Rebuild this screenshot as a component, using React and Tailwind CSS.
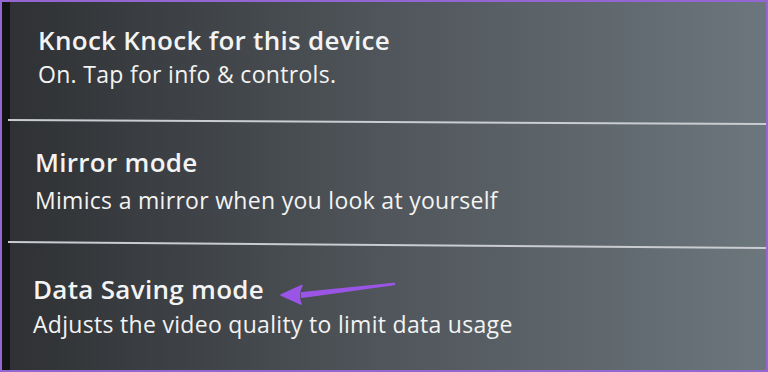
import React from 'react'

const rows = [
  { title: 'Knock Knock for this device', sub: 'On. Tap for info & controls.', pad: 'pt-[23px] pl-[28px]', gap: 'mt-[4px]' },
  { title: 'Mirror mode', sub: 'Mimics a mirror when you look at yourself', pad: 'pt-[24px] pl-[25px]', gap: 'mt-[8px]' },
  { title: 'Data Saving mode', sub: 'Adjusts the video quality to limit data usage', pad: 'pt-[28px] pl-[23px]', gap: 'mt-[5px]' },
]

const Arrow = () => (
  <svg className="absolute left-[276px] top-[278px]" width="122" height="30" viewBox="0 0 122 30">
    <path d="M116 4 L24 13.2 L24 16.8 Z" fill="#9b55e6" stroke="#9b55e6" strokeWidth="2.5" strokeLinejoin="round" />
    <path d="M3 15 L24 5.5 Q19 14.5 23 24 Z" fill="#9b55e6" stroke="#9b55e6" strokeWidth="1.5" strokeLinejoin="round" />
  </svg>
)

export default function App() {
  return (
    <div className="relative w-[768px] h-[372px] border-2 border-[#9466d2] bg-[#111214] flex overflow-hidden" style={{ fontFamily: '"Open Sans", "Noto Sans", sans-serif' }}>
      <div className="w-[8px] shrink-0 bg-[#121315]" />
      <div className="flex-1 flex flex-col bg-gradient-to-r from-[#2f3134] via-[#50565b] to-[#6c767d]">
        {rows.map((r, i) => (
          <React.Fragment key={r.title}>
            {i > 0 && <div className={`h-[2px] -ml-[2px] bg-[#c9cdd1] ${i === 1 ? 'rotate-[0.3deg]' : 'rotate-[0.45deg]'}`} />}
            <div className={`flex-1 flex flex-col text-[#f3f3f3] ${r.pad}`}>
              <div className="text-[26px] leading-[31px] font-semibold tracking-[0.3px]">{r.title}</div>
              <div className={`text-[23px] leading-[28px] font-medium tracking-[0.3px] ${r.gap}`}>{r.sub}</div>
            </div>
          </React.Fragment>
        ))}
      </div>
      <Arrow />
    </div>
  )
}
